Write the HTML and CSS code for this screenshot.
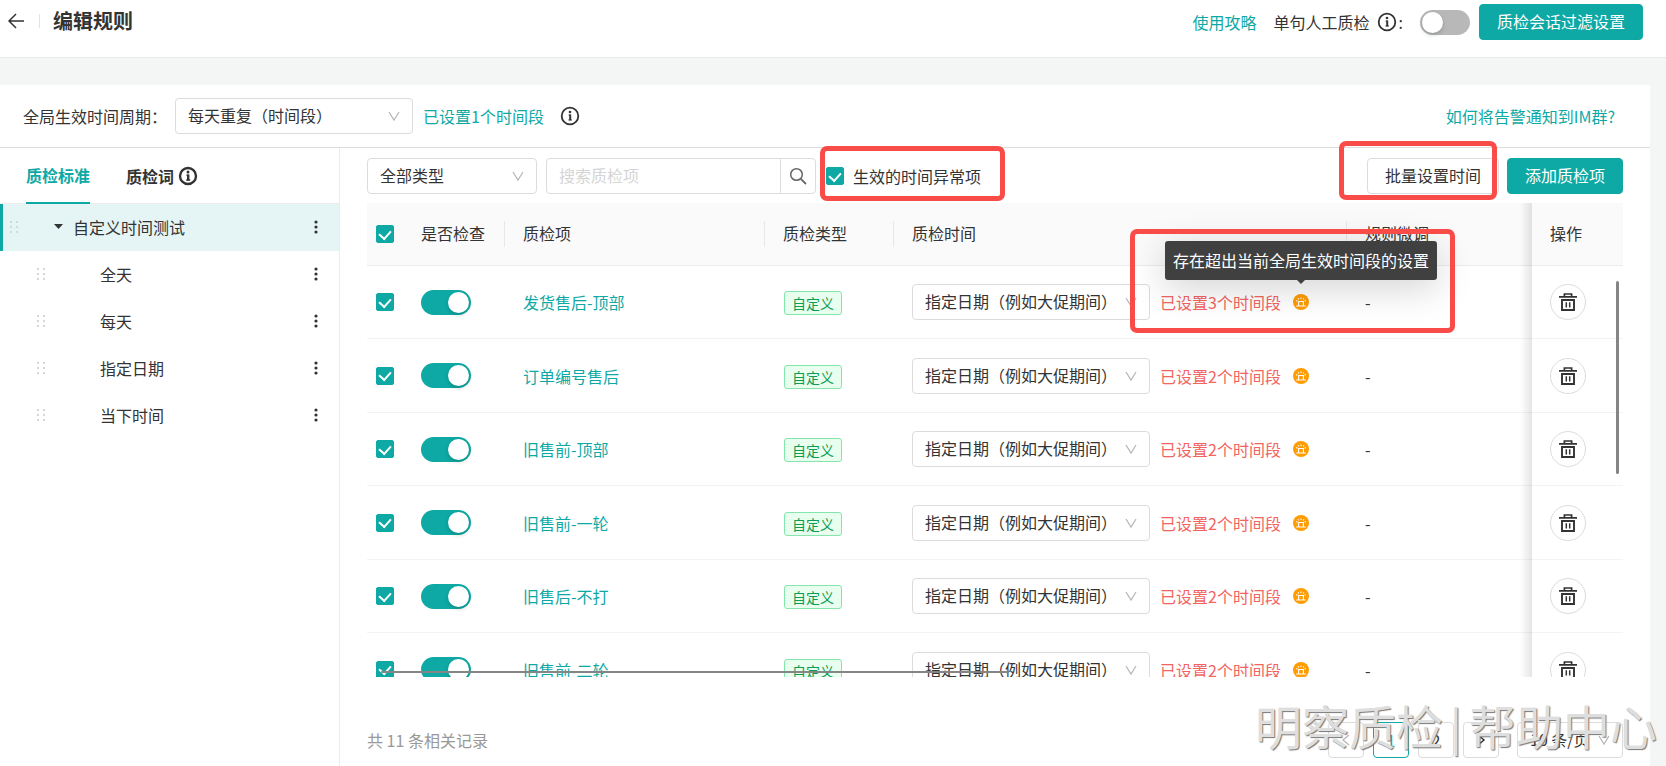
FILE: index.html
```html
<!DOCTYPE html>
<html lang="zh-CN">
<head>
<meta charset="utf-8">
<title>编辑规则</title>
<link rel="stylesheet" href="styles.css">
</head>
<body>
<svg class="sprite" aria-hidden="true">
  <symbol id="i-chevron" viewBox="0 0 12 12"><path d="M1 2l5 8 5-8" fill="none" stroke="currentColor" stroke-width="1.2"/></symbol>
  <symbol id="i-info" viewBox="0 0 20 20"><circle cx="10" cy="10" r="8.3" fill="none" stroke="currentColor" stroke-width="1.8"/><path d="M10.2 8.5V14.2" fill="none" stroke="currentColor" stroke-width="2"/><path d="M8.6 9h2M8.4 14h3.6" fill="none" stroke="currentColor" stroke-width="1"/><circle cx="10" cy="6" r="1.3" fill="currentColor"/></symbol>
  <symbol id="i-info-bold" viewBox="0 0 20 20"><circle cx="10" cy="10" r="8" fill="none" stroke="currentColor" stroke-width="2.4"/><path d="M10.2 8.5V14.5" fill="none" stroke="currentColor" stroke-width="2.4"/><path d="M8.4 9.2h2M8.2 14h4" fill="none" stroke="currentColor" stroke-width="1.3"/><circle cx="10" cy="6" r="1.5" fill="currentColor"/></symbol>
  <symbol id="i-drag" viewBox="0 0 10 14"><path d="M1 1h2v2H1zM7 1h2v2H7zM1 6h2v2H1zM7 6h2v2H7zM1 11h2v2H1zM7 11h2v2H7z" fill="currentColor"/></symbol>
  <symbol id="i-more" viewBox="0 0 4 16"><circle cx="2" cy="3" r="1.6" fill="currentColor"/><circle cx="2" cy="8" r="1.6" fill="currentColor"/><circle cx="2" cy="13" r="1.6" fill="currentColor"/></symbol>
  <symbol id="i-alarm" viewBox="0 0 16 16"><circle cx="8" cy="8" r="8" fill="#ff9c00"/><path d="M3.2 12h9.6M5.6 12V7.5h4.8V12M8 3.6v1.4M5 4.2l.9 1.3M11 4.2l-.9 1.3M3.2 6.6l1.2.7M12.8 6.6l-1.2.7" fill="none" stroke="#fff" stroke-width="1.1"/></symbol>
  <symbol id="i-trash" viewBox="0 0 18 18"><path d="M0 3.8h18M5.4 3.6V1h7.2v2.6" fill="none" stroke="currentColor" stroke-width="1.7"/><path d="M3 7h12v10H3z" fill="none" stroke="currentColor" stroke-width="1.9"/><path d="M7.3 9.3v5.2M10.7 9.3v5.2" fill="none" stroke="currentColor" stroke-width="1.5"/></symbol>
</svg>

<header class="topbar">
  <div class="topbar-left">
    <button class="icon-btn" aria-label="返回"><svg width="16" height="16" viewBox="0 0 16 16"><path d="M8 1L1 8l7 7M1 8h15" fill="none" stroke="currentColor" stroke-width="1.5"/></svg></button>
    <span class="divider"></span>
    <h1>编辑规则</h1>
  </div>
  <div class="topbar-right">
    <a href="#">使用攻略</a>
    <label class="manual" for="manual">单句人工质检 <svg class="info"><use href="#i-info"/></svg>:</label>
    <input type="checkbox" class="switch" id="manual">
    <button class="btn primary">质检会话过滤设置</button>
  </div>
</header>

<main class="panel">
  <section class="period">
    <label for="period">全局生效时间周期：</label>
    <span class="select wide"><select id="period"><option>每天重复（时间段）</option></select><svg><use href="#i-chevron"/></svg></span>
    <a href="#">已设置1个时间段</a>
    <svg class="info"><use href="#i-info"/></svg>
    <a class="help" href="#">如何将告警通知到IM群?</a>
  </section>

  <div class="body">
    <aside class="side">
      <nav class="tabs">
        <a class="tab active" href="#">质检标准</a>
        <a class="tab" href="#">质检词 <svg class="info"><use href="#i-info-bold"/></svg></a>
      </nav>
      <ul class="tree">
        <li class="node active"><svg class="drag"><use href="#i-drag"/></svg><span class="caret"></span><span class="name">自定义时间测试</span><button class="icon-btn more" aria-label="更多"><svg><use href="#i-more"/></svg></button></li>
        <li class="node child"><svg class="drag"><use href="#i-drag"/></svg><span class="name">全天</span><button class="icon-btn more" aria-label="更多"><svg><use href="#i-more"/></svg></button></li>
        <li class="node child"><svg class="drag"><use href="#i-drag"/></svg><span class="name">每天</span><button class="icon-btn more" aria-label="更多"><svg><use href="#i-more"/></svg></button></li>
        <li class="node child"><svg class="drag"><use href="#i-drag"/></svg><span class="name">指定日期</span><button class="icon-btn more" aria-label="更多"><svg><use href="#i-more"/></svg></button></li>
        <li class="node child"><svg class="drag"><use href="#i-drag"/></svg><span class="name">当下时间</span><button class="icon-btn more" aria-label="更多"><svg><use href="#i-more"/></svg></button></li>
      </ul>
    </aside>

    <section class="content">
      <div class="toolbar">
        <span class="select type"><select aria-label="类型"><option>全部类型</option></select><svg><use href="#i-chevron"/></svg></span>
        <div class="search">
          <input type="text" placeholder="搜索质检项" aria-label="搜索质检项">
          <button aria-label="搜索"><svg width="18" height="18" viewBox="0 0 18 18"><circle cx="7.5" cy="7.5" r="5.8" fill="none" stroke="currentColor" stroke-width="1.5"/><path d="M11.8 11.8l5.2 5.2" stroke="currentColor" stroke-width="1.8"/></svg></button>
        </div>
        <div class="abnormal">
          <input type="checkbox" class="check" id="abnormal" checked>
          <label for="abnormal">生效的时间异常项</label>
          <span class="mark mark-filter"></span>
        </div>
        <div class="actions">
          <div class="batch"><button class="btn">批量设置时间</button><span class="mark mark-batch"></span></div>
          <button class="btn primary">添加质检项</button>
        </div>
      </div>

      <div class="table-wrap">
        <table>
          <colgroup><col class="c-check"><col class="c-on"><col class="c-name"><col class="c-type"><col class="c-time"><col><col class="c-op"></colgroup>
          <thead>
            <tr>
              <th class="pick"><input type="checkbox" class="check" aria-label="全选" checked></th>
              <th><div class="cell sep">是否检查</div></th>
              <th><div class="cell sep">质检项</div></th>
              <th><div class="cell sep">质检类型</div></th>
              <th><div class="cell sep">质检时间</div></th>
              <th><div class="cell">规则微调</div></th>
              <th class="fixed"><div class="cell">操作</div></th>
            </tr>
          </thead>
          <tbody>
            <tr>
              <td class="pick"><input type="checkbox" class="check" aria-label="选择" checked></td>
              <td><input type="checkbox" class="switch" aria-label="是否检查" checked></td>
              <td><a href="#">发货售后-顶部</a></td>
              <td><span class="tag">自定义</span></td>
              <td class="lifted"><div class="time"><span class="select wide"><select aria-label="质检时间"><option>指定日期（例如大促期间）</option></select><svg><use href="#i-chevron"/></svg></span><a class="warn" href="#">已设置3个时间段</a><span class="alarm"><svg><use href="#i-alarm"/></svg><span class="tooltip" role="tooltip">存在超出当前全局生效时间段的设置</span><span class="mark mark-tip"></span></span></div></td>
              <td>-</td>
              <td class="fixed"><button class="trash" aria-label="删除"><svg><use href="#i-trash"/></svg></button></td>
            </tr>
            <tr>
              <td class="pick"><input type="checkbox" class="check" aria-label="选择" checked></td>
              <td><input type="checkbox" class="switch" aria-label="是否检查" checked></td>
              <td><a href="#">订单编号售后</a></td>
              <td><span class="tag">自定义</span></td>
              <td><div class="time"><span class="select wide"><select aria-label="质检时间"><option>指定日期（例如大促期间）</option></select><svg><use href="#i-chevron"/></svg></span><a class="warn" href="#">已设置2个时间段</a><span class="alarm"><svg><use href="#i-alarm"/></svg></span></div></td>
              <td>-</td>
              <td class="fixed"><button class="trash" aria-label="删除"><svg><use href="#i-trash"/></svg></button></td>
            </tr>
            <tr>
              <td class="pick"><input type="checkbox" class="check" aria-label="选择" checked></td>
              <td><input type="checkbox" class="switch" aria-label="是否检查" checked></td>
              <td><a href="#">旧售前-顶部</a></td>
              <td><span class="tag">自定义</span></td>
              <td><div class="time"><span class="select wide"><select aria-label="质检时间"><option>指定日期（例如大促期间）</option></select><svg><use href="#i-chevron"/></svg></span><a class="warn" href="#">已设置2个时间段</a><span class="alarm"><svg><use href="#i-alarm"/></svg></span></div></td>
              <td>-</td>
              <td class="fixed"><button class="trash" aria-label="删除"><svg><use href="#i-trash"/></svg></button></td>
            </tr>
            <tr>
              <td class="pick"><input type="checkbox" class="check" aria-label="选择" checked></td>
              <td><input type="checkbox" class="switch" aria-label="是否检查" checked></td>
              <td><a href="#">旧售前-一轮</a></td>
              <td><span class="tag">自定义</span></td>
              <td><div class="time"><span class="select wide"><select aria-label="质检时间"><option>指定日期（例如大促期间）</option></select><svg><use href="#i-chevron"/></svg></span><a class="warn" href="#">已设置2个时间段</a><span class="alarm"><svg><use href="#i-alarm"/></svg></span></div></td>
              <td>-</td>
              <td class="fixed"><button class="trash" aria-label="删除"><svg><use href="#i-trash"/></svg></button></td>
            </tr>
            <tr>
              <td class="pick"><input type="checkbox" class="check" aria-label="选择" checked></td>
              <td><input type="checkbox" class="switch" aria-label="是否检查" checked></td>
              <td><a href="#">旧售后-不打</a></td>
              <td><span class="tag">自定义</span></td>
              <td><div class="time"><span class="select wide"><select aria-label="质检时间"><option>指定日期（例如大促期间）</option></select><svg><use href="#i-chevron"/></svg></span><a class="warn" href="#">已设置2个时间段</a><span class="alarm"><svg><use href="#i-alarm"/></svg></span></div></td>
              <td>-</td>
              <td class="fixed"><button class="trash" aria-label="删除"><svg><use href="#i-trash"/></svg></button></td>
            </tr>
            <tr>
              <td class="pick"><input type="checkbox" class="check" aria-label="选择" checked></td>
              <td><input type="checkbox" class="switch" aria-label="是否检查" checked></td>
              <td><a href="#">旧售前-二轮</a></td>
              <td><span class="tag">自定义</span></td>
              <td><div class="time"><span class="select wide"><select aria-label="质检时间"><option>指定日期（例如大促期间）</option></select><svg><use href="#i-chevron"/></svg></span><a class="warn" href="#">已设置2个时间段</a><span class="alarm"><svg><use href="#i-alarm"/></svg></span></div></td>
              <td>-</td>
              <td class="fixed"><button class="trash" aria-label="删除"><svg><use href="#i-trash"/></svg></button></td>
            </tr>
          </tbody>
        </table>
        <span class="bar-x"></span>
        <span class="bar-y"></span>
      </div>

      <footer class="footer">
        <span class="total">共 11 条相关记录</span>
        <nav class="pager">
          <button class="page off" aria-label="上一页"><svg viewBox="0 0 12 12"><path d="M9 1L3 6l6 5" fill="none" stroke="currentColor" stroke-width="1.5"/></svg></button>
          <button class="page current">1</button>
          <button class="page">2</button>
          <button class="page" aria-label="下一页"><svg viewBox="0 0 12 12"><path d="M3 1l6 5-6 5" fill="none" stroke="currentColor" stroke-width="1.5"/></svg></button>
          <span class="select size"><select aria-label="每页条数"><option>10 条/页</option></select><svg><use href="#i-chevron"/></svg></span>
        </nav>
      </footer>
    </section>
  </div>
</main>
<div class="watermark"><span>明察质检</span><span class="bar">|</span><span>帮助中心</span></div>
</body>
</html>
```

FILE: styles.css
```css
* { box-sizing: border-box; }

:root {
  --teal: #0fa9a5;
  --text: #333;
  --line: #dcdcdc;
  --soft: #f2f3f3;
  --mark: #f94c48;
}

body {
  margin: 0;
  height: 100vh;
  display: flex;
  flex-direction: column;
  overflow: hidden;
  position: relative;
  background: #f4f6f6;
  color: var(--text);
  font: 16px/24px "Noto Sans CJK SC", sans-serif;
}

.sprite { position: absolute; width: 0; height: 0; }
svg { display: block; flex: none; }
a { color: var(--teal); text-decoration: none; white-space: nowrap; }
button, input, select { font: inherit; color: inherit; margin: 0; }
button { cursor: pointer; }
h1 { margin: 0; font-size: 20px; line-height: 28px; font-weight: 700; }

.icon-btn { border: 0; padding: 0; background: none; }
.info { width: 20px; height: 20px; }

.btn {
  height: 36px;
  padding: 0 17px 2px;
  border: 1px solid var(--line);
  border-radius: 4px;
  background: #fff;
  white-space: nowrap;
}
.btn.primary { background: var(--teal); border-color: var(--teal); color: #fff; }

.select { position: relative; display: inline-block; flex: none; height: 36px; }
.select select {
  appearance: none;
  width: 100%;
  height: 36px;
  padding: 0 32px 2px 12px;
  border: 1px solid var(--line);
  border-radius: 4px;
  background: #fff;
}
.select svg {
  position: absolute;
  right: 13px;
  top: 12px;
  width: 12px;
  height: 12px;
  color: #b5b5b5;
  pointer-events: none;
}
.select.wide { width: 238px; }
.select.type { width: 170px; }
.select.size { width: 106px; margin-left: 9px; }

.check {
  appearance: none;
  flex: none;
  display: grid;
  place-items: center;
  width: 18px;
  height: 18px;
  border: 1px solid var(--line);
  border-radius: 2px;
}
.check:checked { background: var(--teal); border-color: var(--teal); }
.check:checked::after {
  content: "";
  width: 6px;
  height: 9px;
  margin-bottom: 2px;
  border: solid #fff;
  border-width: 0 2px 2px 0;
  transform: rotate(42deg);
}

.switch {
  appearance: none;
  flex: none;
  display: flex;
  width: 50px;
  height: 25px;
  padding: 2px;
  border-radius: 13px;
  background: #b8b8b8;
}
.switch::after {
  content: "";
  width: 21px;
  height: 21px;
  border-radius: 50%;
  background: #fff;
  box-shadow: 0 2px 4px rgba(0, 35, 11, .2);
}
.switch:checked { background: var(--teal); justify-content: flex-end; }

.topbar {
  display: flex;
  justify-content: space-between;
  height: 58px;
  padding: 4px 23px 0 8px;
  border-bottom: 1px solid #e9ebeb;
  background: #fff;
}
.topbar-left, .topbar-right { display: flex; align-items: center; height: 36px; }
.topbar-left { height: 34px; }
.divider { width: 1px; height: 14px; margin: 0 13px 0 15px; background: #e3e3e3; }
.topbar-right .btn { margin-left: 9px; }
.manual { display: flex; align-items: center; gap: 7px; margin: 0 17px; white-space: nowrap; }
.manual .info { margin-right: -5px; }

.panel {
  flex: 1;
  min-height: 0;
  display: flex;
  flex-direction: column;
  margin: 27px 16px 0 0;
  background: #fff;
}
.period {
  display: flex;
  align-items: center;
  height: 63px;
  padding: 0 35px 0 23px;
  border-bottom: 1px solid var(--line);
}
.period label { width: 152px; white-space: nowrap; }
.period a { margin-left: 10px; }
.period .info { margin-left: 16px; }
.period .help { margin-left: auto; }

.body { flex: 1; min-height: 0; display: flex; }

.side { flex: none; width: 340px; border-right: 1px solid #ececec; }
.tabs {
  display: flex;
  gap: 36px;
  height: 56px;
  padding-left: 26px;
  border-bottom: 1px solid #ececec;
}
.tab { display: flex; align-items: center; gap: 4px; height: 56px; font-weight: 700; color: var(--text); }
.tab.active { color: var(--teal); border-bottom: 2px solid var(--teal); }
.tree { list-style: none; margin: 0; padding: 0; }
.node { display: flex; align-items: center; height: 47px; padding: 0 20px 2px 36px; }
.node.active { padding-left: 6px; border-left: 3px solid var(--teal); background: #e5f5f5; }
.drag { width: 10px; height: 14px; color: #d3d8d8; }
.caret {
  width: 9px;
  height: 5px;
  margin: 0 10px 0 35px;
  background: var(--text);
  clip-path: polygon(0 0, 100% 0, 50% 100%);
}
.child .drag { margin-right: 54px; }
.name { flex: 1; }
.more svg { width: 6px; height: 16px; }

.content { flex: 1; min-width: 0; display: flex; flex-direction: column; padding: 10px 27px 8px; }
.toolbar { display: flex; align-items: center; gap: 9px; margin-bottom: 9px; }
.search { display: flex; width: 270px; height: 36px; border: 1px solid var(--line); border-radius: 4px; }
.search input { flex: 1; min-width: 0; padding: 0 12px 2px; border: 0; background: none; outline: 0; }
.search input::placeholder { color: #d5d5d5; }
.search button {
  display: grid;
  place-items: center;
  width: 35px;
  padding: 0;
  border: 0;
  border-left: 1px solid var(--line);
  background: none;
  color: #666;
}
.abnormal { position: relative; display: flex; align-items: center; gap: 9px; padding-left: 1px; white-space: nowrap; }
.actions { display: flex; gap: 8px; margin-left: auto; }
.batch { position: relative; }

.mark {
  position: absolute;
  z-index: 3;
  border: 5px solid var(--mark);
  border-radius: 7px;
  pointer-events: none;
}
.mark-filter { inset: -18px -24px -13px -5px; }
.mark-batch { inset: -17px 2px -6px -28px; }
.mark-tip { left: -163px; top: -65px; width: 325px; height: 104px; }

.table-wrap { position: relative; flex: 1; min-height: 0; overflow: hidden; }
table { width: 100%; table-layout: fixed; border-collapse: separate; border-spacing: 0; }
.c-check { width: 36px; }
.c-on { width: 102px; }
.c-name { width: 260px; }
.c-type { width: 129px; }
.c-time { width: 453px; }
.c-op { width: 91px; }
th {
  padding: 18px 0 18px 18px;
  border-bottom: 1px solid #ececec;
  background: #fafafa;
  font-weight: 400;
  text-align: left;
}
td { height: 73px; padding: 0 0 0 18px; border-bottom: 1px solid var(--soft); white-space: nowrap; }
tr:nth-child(even) td { height: 74px; }
.pick { padding-left: 9px; }
.cell { height: 26px; line-height: 24px; }
.cell.sep { border-right: 1px solid #e8e8e8; }
.fixed { position: relative; background-color: #fff; }
th.fixed { background-color: #fafafa; }
.fixed::before {
  content: "";
  position: absolute;
  top: 0;
  bottom: -1px;
  left: -12px;
  width: 12px;
  background: linear-gradient(to right, transparent, rgba(0, 0, 0, .1));
}
.lifted { position: relative; z-index: 2; }
.tag {
  display: inline-block;
  padding: 0 7px;
  margin-left: 1px;
  border: 1px solid #85e6ab;
  border-radius: 3px;
  background: #e8ffef;
  color: #0b9d52;
  font-size: 14px;
  line-height: 22px;
  vertical-align: middle;
}
.time { display: flex; align-items: center; }
.warn { margin: 0 12px 0 10px; color: #f2655f; }
.alarm { position: relative; }
.alarm svg { width: 16px; height: 16px; }
.tooltip {
  position: absolute;
  left: 50%;
  bottom: 30px;
  transform: translateX(-50%);
  padding: 8px;
  border-radius: 3px;
  background: #404040;
  color: #fff;
  line-height: 23px;
  box-shadow: 0 8px 36px rgba(0, 0, 0, .18);
}
.tooltip::after {
  content: "";
  position: absolute;
  left: 50%;
  top: 100%;
  margin-left: -4px;
  border: 4px solid transparent;
  border-top-color: #404040;
  border-bottom: 0;
}
.trash {
  display: grid;
  place-items: center;
  width: 36px;
  height: 36px;
  padding: 0;
  border: 1px solid var(--line);
  border-radius: 50%;
  background: #fff;
}
.trash svg { width: 18px; height: 18px; }
.bar-x, .bar-y { position: absolute; z-index: 2; border-radius: 2px; background: #858585; }
.bar-x { left: 14px; bottom: 4px; width: 50%; height: 2px; }
.bar-y { right: 4px; top: 78px; width: 3px; height: 193px; }

.footer { display: flex; align-items: center; justify-content: space-between; margin-top: 45px; }
.total { color: #999; }
.pager { display: flex; gap: 9px; }
.page {
  display: grid;
  place-items: center;
  width: 36px;
  height: 36px;
  padding: 0;
  border: 1px solid var(--line);
  border-radius: 4px;
  background: #fff;
}
.page svg { width: 12px; height: 12px; }
.page.off { color: #bbb; }
.page.current { border-color: var(--teal); color: var(--teal); }

.watermark {
  position: absolute;
  right: 9px;
  bottom: 6px;
  z-index: 5;
  display: flex;
  align-items: center;
  gap: 7px;
  color: #dedede;
  font-size: 47px;
  line-height: 70px;
  font-weight: 400;
  text-shadow: 1px 1px 1px #777;
  pointer-events: none;
}
.watermark .bar { font-size: 44px; }
```
